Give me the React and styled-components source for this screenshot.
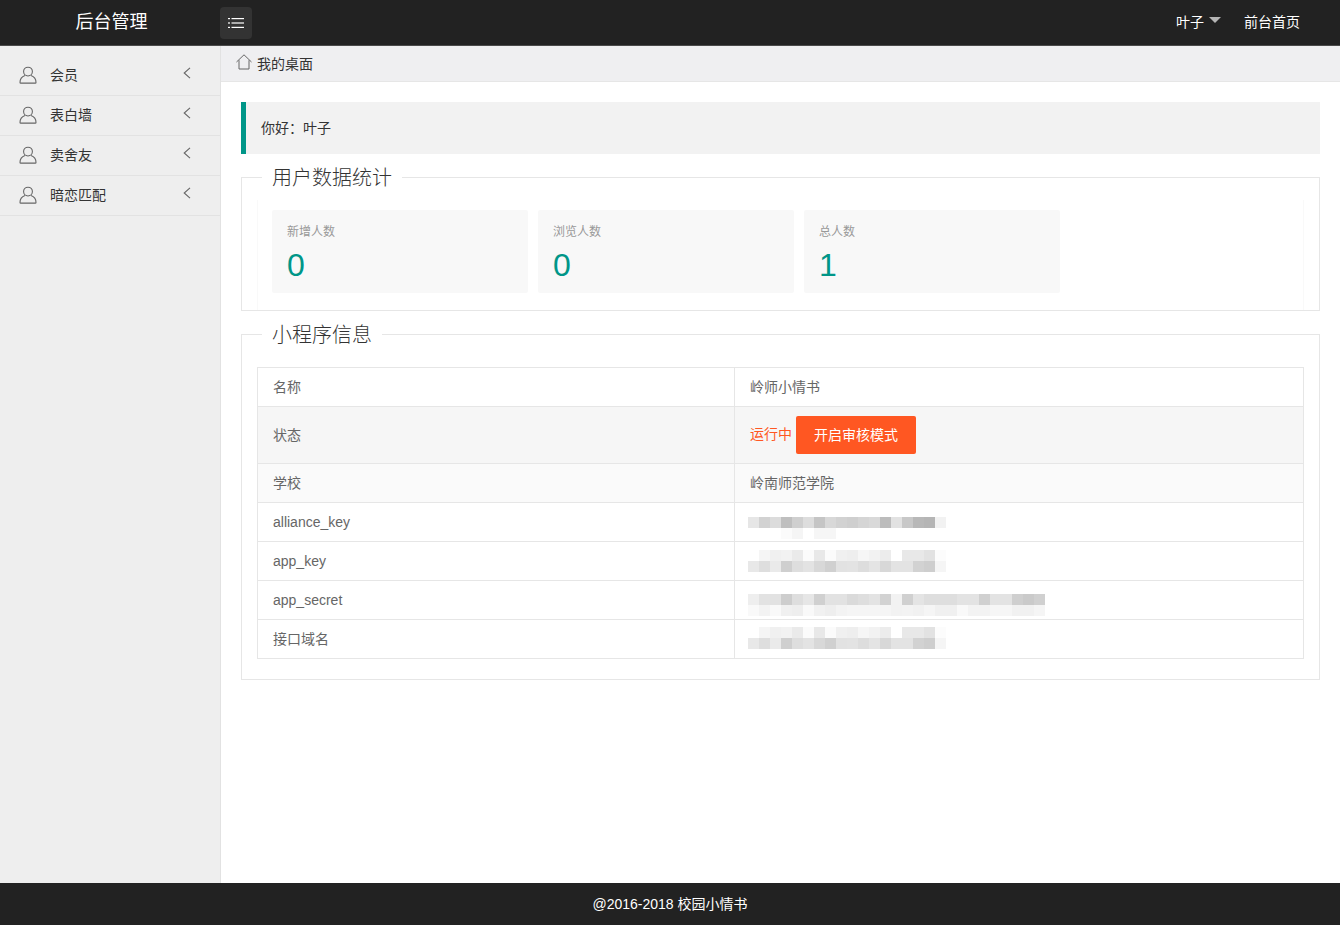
import React from "react";
import styled, { createGlobalStyle } from "styled-components";

const FONT = `"Liberation Sans", "Noto Sans CJK SC", sans-serif`;

const GlobalStyle = createGlobalStyle`
  html, body {
    margin: 0;
    padding: 0;
    height: 100%;
  }
  body {
    font-family: ${FONT};
    font-size: 14px;
    color: #333;
    background: #fff;
  }
  * {
    box-sizing: border-box;
  }
`;

const menuItems = ["会员", "表白墙", "卖舍友", "暗恋匹配"];

const stats = [
  { label: "新增人数", value: 0 },
  { label: "浏览人数", value: 0 },
  { label: "总人数", value: 1 },
];

const appKeyMosaic = [
  "ff,f5,f0,f2,ea,fb,e8,fb,f0,ee,f6,f2,ec,ff,e8,e8,e2,fc",
  "e8,de,ea,cf,de,e3,d8,d0,e2,e3,dd,e4,d8,e3,e3,d2,ce,f5",
];

const mosaics = {
  alliance: {
    offset: 5,
    rows: [
      "e6,d2,dc,bf,cf,dd,c5,d8,d2,cf,d5,d9,bc,e2,c8,b8,b5,f2",
      "ff,ff,ff,fb,f5,ff,f6,f6,ff,ff,ff,ff,ff,ff,ff,ff,ff,ff",
    ],
  },
  appKey: { offset: -1, rows: appKeyMosaic },
  secret: {
    offset: 4,
    rows: [
      "ee,e2,e2,cd,de,e6,d0,e2,e2,da,de,e3,d2,f2,d0,e4,de,de,de,e3,e3,d0,e3,e3,cf,ca,d0",
      "f9,f3,f9,f0,ee,f9,f1,ee,f3,f5,f5,f5,f5,f2,f3,f1,f5,f0,f0,f9,f3,f3,f6,f6,f1,f1,f5",
    ],
  },
  domain: { offset: -2, rows: appKeyMosaic },
};

const Page = styled.div`
  display: flex;
  flex-direction: column;
  height: 100vh;
  min-height: 925px;
  overflow: hidden;
`;

const Header = styled.header`
  display: flex;
  align-items: center;
  flex: 0 0 46px;
  background: #222;
  border-bottom: 1px solid #4a4a4a;
  color: #fff;
`;

const Logo = styled.div`
  width: 220px;
  padding-left: 3px;
  margin-top: -5px;
  text-align: center;
  font-size: 18px;
  color: #fff;
`;

const MenuToggle = styled.button`
  display: flex;
  align-items: center;
  justify-content: center;
  width: 32px;
  height: 32px;
  margin-top: 1px;
  padding: 0;
  border: 0;
  border-radius: 4px;
  background: #333;
`;

const HeaderRight = styled.div`
  display: flex;
  align-items: center;
  margin-left: auto;
  padding-right: 40px;
  margin-top: -4px;
`;

const UserName = styled.span`
  display: flex;
  align-items: center;
  color: #fff;
`;

const Caret = styled.i`
  width: 0;
  height: 0;
  margin: -1px 0 0 5px;
  border-style: solid;
  border-width: 6px 6px 0;
  border-color: #b5b5b5 transparent transparent;
`;

const HeaderLink = styled.a`
  margin-left: 23px;
  color: #fff;
`;

const Body = styled.div`
  display: flex;
  flex: 1;
  min-height: 0;
`;

const Sidebar = styled.aside`
  flex: 0 0 221px;
  padding-top: 10px;
  background: #eee;
  border-right: 1px solid #e2e2e2;
`;

const MenuItem = styled.div`
  display: flex;
  align-items: center;
  height: 40px;
  padding-left: 19px;
  border-bottom: 1px solid #e2e2e2;
  color: #333;
`;

const UserGlyph = styled.svg`
  margin-bottom: 2px;
`;

const MenuLabel = styled.span`
  margin-left: 13px;
  margin-bottom: 3px;
`;

const MenuChevron = styled.svg`
  margin: -5px 29px 0 auto;
`;

const Main = styled.main`
  flex: 1;
  min-width: 0;
`;

const Breadcrumb = styled.div`
  display: flex;
  align-items: center;
  height: 36px;
  padding-left: 15px;
  background: #efeff1;
  border-bottom: 1px solid #e6e6e6;
  color: #333;
`;

const CrumbIcon = styled.svg`
  margin-bottom: 3px;
`;

const CrumbText = styled.span`
  margin-left: 5px;
  margin-bottom: 2px;
`;

const Content = styled.div`
  padding: 20px 20px 0;
`;

const Quote = styled.div`
  display: flex;
  align-items: center;
  height: 52px;
  padding: 0 0 2px 15px;
  border-left: 5px solid #009688;
  background: #f2f2f2;
  color: #333;
`;

const Field = styled.fieldset`
  margin: 11px 0 0;
  padding: ${(p) => p.$padding};
  border: 1px solid #e6e6e6;
  min-width: 0;
`;

const Legend = styled.legend`
  margin-left: 5px;
  padding: 2px 10px 0;
  font-size: 20px;
  line-height: 22px;
  font-weight: 300;
  color: #333;
`;

const StatsPanel = styled.div`
  display: flex;
  gap: 10px;
  margin-top: 11px;
  padding: 10px 14px 17px;
  border-right: 1px solid #f9f9f9;
  border-left: 1px solid #f9f9f9;
`;

const StatCard = styled.div`
  flex: 0 0 256px;
  height: 83px;
  padding: 14px 15px 0;
  border-radius: 2px;
  background: #f8f8f8;
`;

const StatLabel = styled.div`
  font-size: 12px;
  line-height: 17px;
  color: #999;
`;

const StatValue = styled.div`
  margin-top: 6px;
  font-size: 32px;
  line-height: 36px;
  color: #009688;
`;

const InfoTable = styled.table`
  width: 100%;
  border-collapse: collapse;
  table-layout: fixed;
  color: #666;
`;

const Row = styled.tr`
  background: ${(p) => p.$bg || "#fff"};
`;

const Cell = styled.td`
  height: 39px;
  padding: 9px 15px;
  line-height: 20px;
  border: 1px solid #e6e6e6;
  width: ${(p) => p.$width || "auto"};
`;

const StatusWrap = styled.div`
  display: flex;
  align-items: center;
`;

const StatusText = styled.span`
  margin: 0 4px 2px 0;
  color: #ff5722;
`;

const ActionButton = styled.button`
  width: 120px;
  height: 38px;
  padding: 0 0 2px;
  border: 0;
  border-radius: 2px;
  background: #ff5722;
  color: #fff;
  font-family: ${FONT};
  font-size: 14px;
`;

const MosaicBox = styled.div`
  display: flow-root;
  height: 20px;
`;

const MosaicArt = styled.svg`
  display: block;
  margin-left: -2px;
  margin-top: ${(p) => p.$offset}px;
  overflow: visible;
`;

const Footer = styled.footer`
  display: flex;
  align-items: center;
  justify-content: center;
  flex: 0 0 42px;
  padding-bottom: 2px;
  background: #222;
  color: #fff;
`;

function UserIcon() {
  return (
    <UserGlyph width="18" height="18" viewBox="0 0 18 18" fill="none" stroke="#666" strokeWidth="1.1">
      <circle cx="9" cy="5.6" r="4.4" />
      <path d="M6 9.4C3 10.4 1 12.8 1 16.4c0 .5.3.7.7.7h14.6c.4 0 .7-.2.7-.7 0-3.6-2-6-5-7" />
    </UserGlyph>
  );
}

function Mosaic({ data }) {
  const width = data.rows[0].split(",").length * 11;
  return (
    <MosaicBox>
      <MosaicArt $offset={data.offset} width={width} height="22" viewBox={`0 0 ${width} 22`}>
        {data.rows.map((row, y) =>
          row.split(",").map((c, x) => (
            <rect key={`${y}-${x}`} x={x * 11} y={y * 11} width="11" height="11" fill={`#${c}${c}${c}`} />
          ))
        )}
      </MosaicArt>
    </MosaicBox>
  );
}

export default function App() {
  return (
    <Page>
      <GlobalStyle />
      <Header>
        <Logo>后台管理</Logo>
        <MenuToggle aria-label="menu">
          <svg width="16" height="12" viewBox="0 0 16 12" fill="#fff">
            <rect x="0" y="1" width="2" height="1.2" />
            <rect x="3.5" y="1" width="12.5" height="1.2" />
            <rect x="0" y="5.4" width="2" height="1.2" />
            <rect x="3.5" y="5.4" width="12.5" height="1.2" />
            <rect x="0" y="9.8" width="2" height="1.2" />
            <rect x="3.5" y="9.8" width="12.5" height="1.2" />
          </svg>
        </MenuToggle>
        <HeaderRight>
          <UserName>
            叶子
            <Caret />
          </UserName>
          <HeaderLink>前台首页</HeaderLink>
        </HeaderRight>
      </Header>
      <Body>
        <Sidebar>
          {menuItems.map((item) => (
            <MenuItem key={item}>
              <UserIcon />
              <MenuLabel>{item}</MenuLabel>
              <MenuChevron width="8" height="12" viewBox="0 0 8 12" fill="none" stroke="#666" strokeWidth="1.1">
                <path d="M7 .8 1.2 6 7 11.2" />
              </MenuChevron>
            </MenuItem>
          ))}
        </Sidebar>
        <Main>
          <Breadcrumb>
            <CrumbIcon width="16" height="16" viewBox="0 0 16 16" fill="none" stroke="#666" strokeWidth="1">
              <path d="M.5 8 8 .8 15.5 8" />
              <path d="M3 6.2v8.8h10V6.2" />
            </CrumbIcon>
            <CrumbText>我的桌面</CrumbText>
          </Breadcrumb>
          <Content>
            <Quote>你好：叶子</Quote>
            <Field $padding="0 15px">
              <Legend>用户数据统计</Legend>
              <StatsPanel>
                {stats.map((s) => (
                  <StatCard key={s.label}>
                    <StatLabel>{s.label}</StatLabel>
                    <StatValue>{s.value}</StatValue>
                  </StatCard>
                ))}
              </StatsPanel>
            </Field>
            <Field $padding="21px 15px 20px">
              <Legend>小程序信息</Legend>
              <InfoTable>
                <tbody>
                  <Row>
                    <Cell $width="477px">名称</Cell>
                    <Cell>岭师小情书</Cell>
                  </Row>
                  <Row $bg="#f6f6f6">
                    <Cell>状态</Cell>
                    <Cell>
                      <StatusWrap>
                        <StatusText>运行中</StatusText>
                        <ActionButton>开启审核模式</ActionButton>
                      </StatusWrap>
                    </Cell>
                  </Row>
                  <Row $bg="#fafafa">
                    <Cell>学校</Cell>
                    <Cell>岭南师范学院</Cell>
                  </Row>
                  <Row>
                    <Cell>alliance_key</Cell>
                    <Cell><Mosaic data={mosaics.alliance} /></Cell>
                  </Row>
                  <Row>
                    <Cell>app_key</Cell>
                    <Cell><Mosaic data={mosaics.appKey} /></Cell>
                  </Row>
                  <Row>
                    <Cell>app_secret</Cell>
                    <Cell><Mosaic data={mosaics.secret} /></Cell>
                  </Row>
                  <Row>
                    <Cell>接口域名</Cell>
                    <Cell><Mosaic data={mosaics.domain} /></Cell>
                  </Row>
                </tbody>
              </InfoTable>
            </Field>
          </Content>
        </Main>
      </Body>
      <Footer>@2016-2018 校园小情书</Footer>
    </Page>
  );
}
